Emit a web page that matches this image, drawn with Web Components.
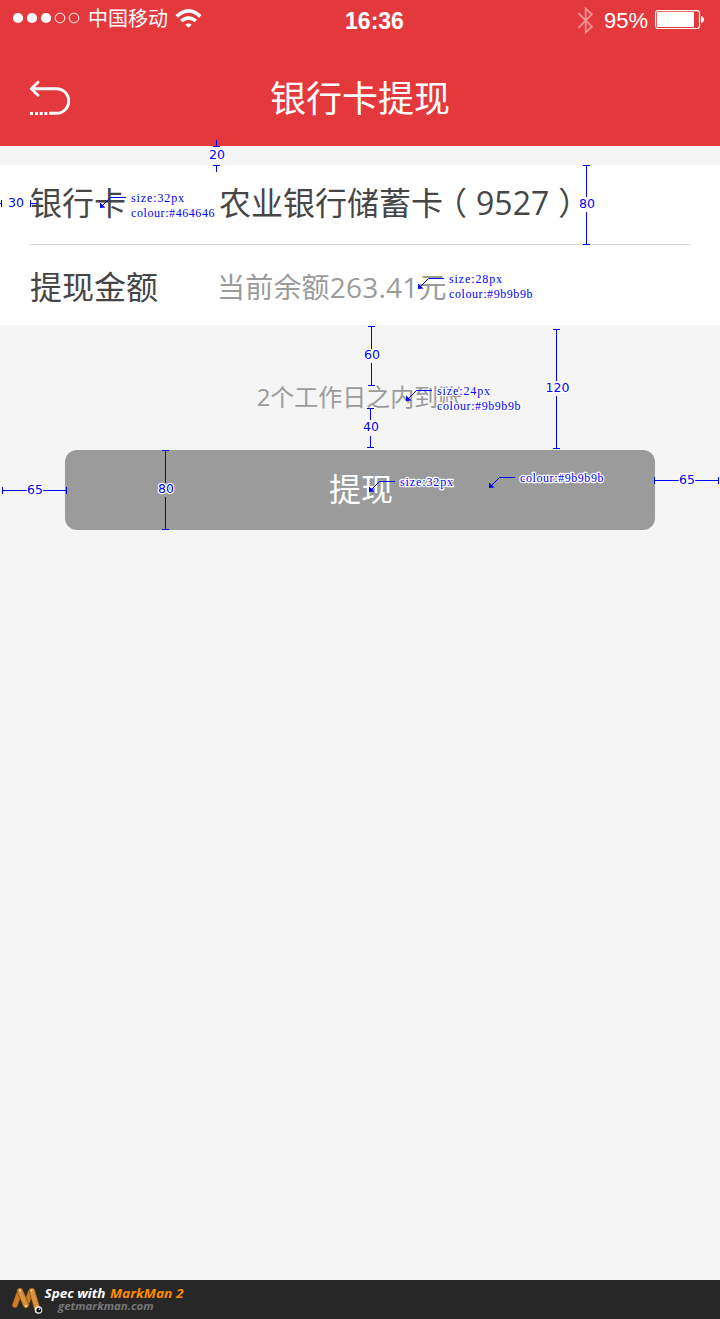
<!DOCTYPE html>
<html lang="zh-CN">
<head>
<meta charset="utf-8">
<title>银行卡提现</title>
<style>
html,body{margin:0;padding:0}
body{font-family:"Open Sans","Noto Sans CJK SC",sans-serif;background:#f5f5f5}
</style>
</head>
<body>
<withdraw-page></withdraw-page>
<script>
const define = (name, html, setup) => customElements.define(name, class extends HTMLElement {
  connectedCallback() {
    if (this.shadowRoot) return;
    const t = document.createElement('template');
    t.innerHTML = html;
    this.attachShadow({mode: 'open'}).append(t.content.cloneNode(true));
    if (setup) setup(this, this.shadowRoot);
  }
});

define('status-bar', `
<style>
:host{display:grid;grid-template-columns:345px 60px 315px;height:40px;color:#fff}
svg{display:block;flex:none}
.side{display:flex;padding-left:12px}
.carrier{font:20px/36px "Noto Sans CJK SC",sans-serif;margin:0 7px 0 8px;width:80px;white-space:nowrap}
.time{font:bold 23px/42px "Liberation Sans",sans-serif;text-align:center;white-space:nowrap;margin-left:-1px}
.right{justify-content:flex-end;padding:0 15px 0 0}
.pct{font:22px/41px "Liberation Sans",sans-serif;margin:0 7px 0 10px;width:44px}
</style>
<div class="side">
<svg width="68" height="36" fill="#fff"><circle cx="6" cy="18" r="5.1"/><circle cx="20" cy="18" r="5.1"/><circle cx="34" cy="18" r="5.1"/><g fill="none" stroke="#fff"><circle cx="48" cy="18" r="4.8"/><circle cx="62" cy="18" r="4.8"/></g></svg>
<span class="carrier">中国移动</span>
<svg width="27" height="36" viewBox="175 0 27 36"><g fill="none" stroke="#fff" stroke-width="3.6"><path d="M176.7 16.4Q188.5 5.4 200.3 16.4"/><path d="M181.2 21Q188.5 14.8 195.8 21"/></g><path fill="#fff" d="M188.5 27.7 185.3 24.8Q188.5 22.2 191.7 24.8Z"/></svg>
</div>
<span class="time">16:36</span>
<div class="side right">
<svg width="17" height="40" viewBox="577 0 17 40"><path fill="none" stroke="#fff" stroke-opacity=".45" stroke-width="1.8" d="M578.3 13 591.8 26.7 585.7 32.4V8.6L591.8 14.3 578.3 28"/></svg>
<span class="pct">95%</span>
<svg width="50" height="40" viewBox="655 0 50 40"><rect x="655.6" y="10.6" width="43.9" height="17.9" rx="2.5" fill="none" stroke="#fff" stroke-width="1.2"/><rect x="657" y="12" width="37" height="15" rx="1" fill="#fff"/><path d="M701 16Q704 17 704 19.5T701 23Z" fill="#fff"/></svg>
</div>`);

define('back-icon', `
<style>:host{display:block;width:42px;height:36px}svg{display:block}</style>
<svg width="42" height="36" viewBox="29 80 42 36"><g fill="none" stroke="#fff" stroke-width="2.9"><path stroke-linecap="round" stroke-linejoin="round" d="M38 82.2 31.3 88.7 38 95.2"/><path d="M31.5 88.7H56.4A12.3 12.3 0 0 1 56.4 113.3H49"/></g><path fill="#fff" d="M30 112h3v3h-3zM35 112h3v3h-3zM39.7 112h3v3h-3zM44.4 112h3v3h-3z"/></svg>`);

define('app-header', `
<style>
:host{display:block;height:146px;background:#e4393c;color:#fff}
.nav{display:grid;grid-template-columns:1fr auto 1fr;align-items:start;padding:0 29px}
h1{font:36px/52px "Noto Sans CJK SC",sans-serif;margin:30px 0 0}
back-icon{margin-top:40px}
</style>
<status-bar></status-bar>
<div class="nav"><back-icon></back-icon><h1><slot></slot></h1></div>`);

define('form-row', `
<style>
:host{display:flex;height:80px;margin:0 30px;box-sizing:border-box;color:#464646;font-size:32px;line-height:76px;white-space:nowrap}
:host([divided]){border-bottom:1px solid #d9d9d9}
:host([divided]) .value{margin-left:-1px;line-height:75px}
.label{width:190px}
:host([muted]){line-height:84px}
:host([muted]) .value{font-size:28px;line-height:85px;color:#9b9b9b;margin-left:-3px;letter-spacing:.2px}
</style>
<span class="label"><slot name="label"></slot></span><span class="value"><slot></slot></span>`);

define('submit-button', `
<style>
:host{display:block;margin:0 65px}
button{display:block;width:100%;height:80px;border:0;border-radius:12px;background:#9b9b9b;color:#fff;font:32px/74px "Noto Sans CJK SC",sans-serif;padding:0 0 6px 2px}
</style><button><slot></slot></button>`);

define('spec-footer', `
<style>
:host{display:flex;height:39px;background:#272727;padding-left:11px;box-sizing:border-box}
svg{display:block}
</style>
<svg width="200" height="39" viewBox="11 0 200 39">
<g fill="none" stroke-linecap="round" stroke-linejoin="round">
<path stroke="#7a4510" stroke-width="6" d="M15 25 20 11 26 25 31 11"/>
<path stroke="#c87f2a" stroke-width="4.8" d="M15 25 20 11 26 25 31 11"/>
<path stroke="#7a4510" stroke-width="6.4" d="M20 11 26 25M32 11 37 28"/>
<path stroke="#d08a35" stroke-width="5.2" d="M20 11 26 25M32 11 37 28"/>
<path stroke="#e0a455" stroke-width="3" stroke-dasharray="1 1.6" stroke-linecap="butt" d="M20 13 26 25M32 13 37 27"/>
</g>
<circle cx="20" cy="10.5" r="1.1" fill="#ffe2a8"/><circle cx="31.5" cy="10.5" r="1.1" fill="#ffe2a8"/><circle cx="26" cy="26" r="1.1" fill="#ffe2a8"/>
<circle cx="38.5" cy="30" r="3.8" fill="#eee"/><circle cx="38.8" cy="30.2" r="2.4" fill="#111"/><circle cx="39.5" cy="29.3" r=".7" fill="#fff"/>
<g font-family="Open Sans" font-weight="700" font-style="italic">
<text x="44.5" y="18" font-size="13" fill="#fff" textLength="61" lengthAdjust="spacingAndGlyphs">Spec with</text>
<text x="110" y="18" font-size="13" fill="#ff8a00" textLength="73.5" lengthAdjust="spacingAndGlyphs">MarkMan 2</text>
<text x="58" y="30" font-size="10.8" fill="#777" textLength="95.5" lengthAdjust="spacingAndGlyphs">getmarkman.com</text>
</g></svg>`);

/* Measurements and callouts drawn over the finished screen. */
const verticals = [
  [586.5,165.5,244.5,197,212,'80',587,208],[371.5,326.5,385.5,349,363,'60',372,359],
  [370.5,408.5,447.5,420,436,'40',371,431],[556.5,329.5,448.5,381,396,'120',557.5,392],
  [165.5,450.5,529.5,483,497,'80',166,493]];
const horizontals = [[490.5,2.5,66.5,27,43,'65',35,494],[480.5,654.5,718.5,679,695,'65',687,484]];
const callouts = [
  [100,208,126,[[131,202,'size:32px'],[131,217,'colour:#464646']]],
  [418,289,444,[[449,283,'size:28px'],[449,298,'colour:#9b9b9b']]],
  [406,401,432,[[437,395,'size:24px'],[437,410,'colour:#9b9b9b']]],
  [369,492,395,[[400,486,'size:32px']]],
  [489,488,515,[[520,482,'colour:#9b9b9b']]]];
define('spec-overlay', `
<style>
:host{position:absolute;inset:0;pointer-events:none}
svg{display:block}
path{fill:none;stroke:#00f}
.head{fill:#00f;stroke:none}
text{fill:#00f;stroke:#fff;stroke-width:2.4px;stroke-linejoin:round;paint-order:stroke}
.num{font:12.5px "DejaVu Sans",sans-serif;text-anchor:middle}
.note{font:12px "Liberation Serif",serif;letter-spacing:.58px}
.size{letter-spacing:.88px}
</style><svg width="720" height="560"></svg>`, (host, root) => {
  let s = '';
  const num = (t,x,y) => `<text class="num" x="${x}" y="${y}">${t}</text>`;
  for (const [x,a,b,g,h,t,tx,ty] of verticals)
    s += `<path d="M${x-3.5} ${a}h7M${x-3.5} ${b}h7M${x} ${a}V${g}M${x} ${h}V${b}"/>` + num(t,tx,ty);
  for (const [y,a,b,g,h,t,tx,ty] of horizontals)
    s += `<path d="M${a} ${y-3.5}v7M${b} ${y-3.5}v7M${a} ${y}H${g}M${h} ${y}H${b}"/>` + num(t,tx,ty);
  s += '<path d="M216.5 140V146M213 146.5h7M213 165.5h7M216.5 165V172M1.5 200v7M0 203.5h2M30.5 200v7M30 203.5h7"/>' + num('20',217,159) + num('30',16,207);
  for (const [x,y,e,notes] of callouts) {
    s += `<path d="M${e} ${y-10.5}H${x+10.5}L${x+2} ${y-2}"/><path class="head" d="M${x} ${y}v-5.5l5.5 5z"/>`;
    for (const [nx,ny,t] of notes) s += `<text class="note${t[0] === 's' ? ' size' : ''}" x="${nx}" y="${ny}">${t}</text>`;
  }
  root.querySelector('svg').innerHTML = s;
});

define('withdraw-page', `
<style>
:host{display:flex;flex-direction:column;position:relative;width:720px;height:1319px;background:#f5f5f5;overflow:hidden}
.card{background:#fff;margin-top:19px;height:160px}
.hint{margin:54px 0 36px -1px;height:35px;font-size:24px;line-height:35px;color:#9b9b9b;text-align:center}
.open{margin:0 9px 0 -8px}.close{margin-left:9px}
spec-footer{margin-top:auto}
</style>
<app-header>银行卡提现</app-header>
<div class="card">
<form-row divided><span slot="label">银行卡</span>农业银行储蓄卡<span class="open">（</span>9527<span class="close">）</span></form-row>
<form-row muted><span slot="label">提现金额</span>当前余额263.41元</form-row>
</div>
<div class="hint">2个工作日之内到账</div>
<submit-button>提现</submit-button>
<spec-footer></spec-footer>
<spec-overlay></spec-overlay>`);
</script>
</body>
</html>
